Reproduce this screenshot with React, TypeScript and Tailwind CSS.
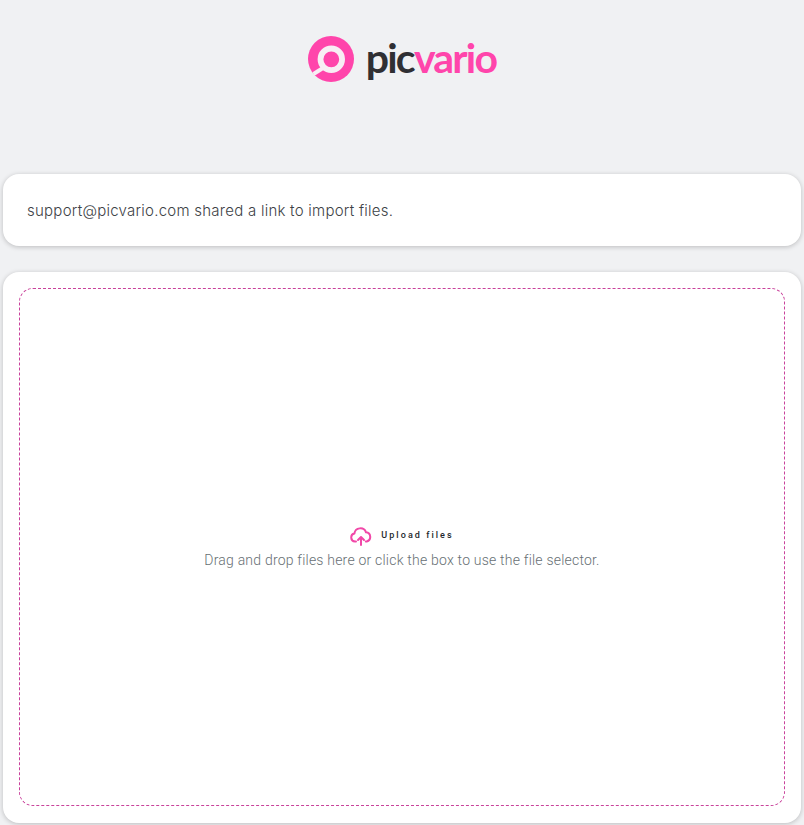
export default function App() {
  return (
    <div className="h-[825px] overflow-hidden bg-[#f0f1f3] px-[3px] font-['Inter',sans-serif]">
      <header className="flex h-[174px] items-start justify-center pt-[36px]">
        <div className="flex items-center gap-[11px]">
          <svg width="47" height="47" viewBox="0 0 47 47" aria-hidden="true">
            <circle cx="23" cy="23" r="23" fill="#ff45ab" />
            <circle cx="23.3" cy="23.3" r="10.8" fill="#ff45ab" stroke="#f8eef4" strokeWidth="5.8" />
            <path d="M15 32 L5.5 38" stroke="#f8eef4" strokeWidth="4" />
          </svg>
          <div className="mt-[-5px] flex h-[47px] items-center font-['Lato',sans-serif] text-[41px] leading-none font-bold tracking-[-1.75px]">
            <span className="text-[#2f2f33]">pic</span>
            <span className="text-[#ff45ab]">vario</span>
          </div>
        </div>
      </header>
      <section className="flex h-[72px] items-center rounded-[16px] bg-white px-[24px] shadow-[0_1px_5px_rgba(0,0,0,0.22)]">
        <p className="mt-[2px] text-[15px] font-light tracking-[0.25px] text-[#3d4246]">support@picvario.com shared a link to import files.</p>
      </section>
      <section className="mt-[26px] h-[551px] rounded-[16px] bg-white p-[16px] shadow-[0_1px_5px_rgba(0,0,0,0.22)]">
        <div className="flex h-[518px] flex-col items-center justify-center rounded-[14px] border border-dashed border-[#c9429b]">
          <div className="mt-[3px] flex h-[20px] items-center gap-[9px]">
            <svg width="22" height="20" viewBox="0 0 22 20" fill="none" stroke="#f148a8" strokeWidth="2" strokeLinecap="round" strokeLinejoin="round" aria-hidden="true">
              <path d="M6 15.5H5a4 4 0 0 1-.6-7.9A6 6 0 0 1 16 6.3a4.7 4.7 0 0 1 .8 9.2h-1" />
              <path d="M11 19v-7.5M8 14 11 11 14 14" />
            </svg>
            <span className="font-['Roboto',sans-serif] text-[9px] font-medium tracking-[2.05px] text-[#23282c]">Upload files</span>
          </div>
          <p className="mt-[4px] font-['Roboto',sans-serif] text-[14px] font-light tracking-[0.21px] text-[#687074]">Drag and drop files here or click the box to use the file selector.</p>
        </div>
      </section>
    </div>
  );
}
